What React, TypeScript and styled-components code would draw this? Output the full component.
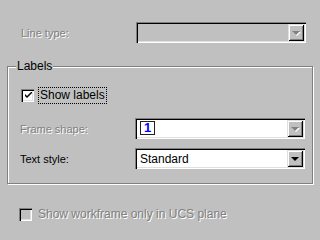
import styled, { createGlobalStyle } from "styled-components";

const GlobalStyle = createGlobalStyle`
  html, body {
    margin: 0;
    padding: 0;
    background: #c0c0c0;
  }
  body {
    font-family: "Liberation Sans", Arial, sans-serif;
    font-size: 11px;
  }
`;

const Dialog = styled.div`
  width: 320px;
  height: 240px;
  background: #c0c0c0;
  overflow: hidden;
  padding-top: 22px;
  box-sizing: border-box;
`;

const FieldRow = styled.div<{ $indent: number; $gap?: number }>`
  display: flex;
  align-items: center;
  padding-left: ${({ $indent }) => $indent}px;
  margin-top: ${({ $gap }) => $gap ?? 0}px;
`;

const Label = styled.span<{ $disabled?: boolean }>`
  width: 115px;
  flex: none;
  color: ${({ $disabled }) => ($disabled ? "#808080" : "#000")};
  text-shadow: ${({ $disabled }) => ($disabled ? "1px 1px 0 #fff" : "none")};
  white-space: nowrap;
`;

const Combo = styled.div<{ $disabled?: boolean }>`
  width: 170px;
  height: 21px;
  box-sizing: border-box;
  display: flex;
  align-items: stretch;
  padding: 2px;
  background: ${({ $disabled }) => ($disabled ? "#c0c0c0" : "#fff")};
  box-shadow: inset 1px 1px 0 #808080, inset 2px 2px 0 #000,
    inset -1px -1px 0 #fff, inset -2px -2px 0 #dfdfdf;
`;

const ComboValue = styled.div`
  flex: 1;
  display: flex;
  align-items: center;
  padding-left: 3px;
  color: #000;
  font-size: 12px;
`;

const Swatch = styled.div`
  width: 15px;
  height: 14px;
  box-sizing: border-box;
  margin-top: 1px;
  border: 1px solid #202020;
  background: #fff;
  color: #0000ff;
  font-weight: bold;
  font-size: 13px;
  line-height: 12px;
  text-align: center;
  align-self: flex-start;
`;

const ArrowButton = styled.div<{ $disabled?: boolean }>`
  width: 16px;
  flex: none;
  background: #c0c0c0;
  display: flex;
  align-items: center;
  justify-content: center;
  box-shadow: inset 1px 1px 0 #dfdfdf, inset -1px -1px 0 #000,
    inset 2px 2px 0 #fff, inset -2px -2px 0 #808080;

  &::after {
    content: "";
    width: 0;
    height: 0;
    margin-top: 1px;
    border-left: 4px solid transparent;
    border-right: 4px solid transparent;
    border-top: 4px solid ${({ $disabled }) => ($disabled ? "#808080" : "#000")};
    filter: ${({ $disabled }) =>
      $disabled ? "drop-shadow(1px 1px 0 #fff)" : "none"};
  }
`;

const GroupBox = styled.div`
  position: relative;
  margin: 23px 0 0 7px;
  width: 306px;
  height: 118px;
  box-sizing: border-box;
  border: 1px solid #808080;
  box-shadow: 1px 1px 0 #fff, inset 1px 1px 0 #fff;
`;

const Legend = styled.span`
  position: absolute;
  top: -7px;
  left: 8px;
  padding: 0 1px;
  background: #c0c0c0;
  color: #000;
  font-size: 12px;
  line-height: 13px;
`;

const CheckRow = styled.div<{ $indent: number; $gap: number }>`
  display: flex;
  align-items: center;
  gap: 4px;
  padding-left: ${({ $indent }) => $indent}px;
  margin-top: ${({ $gap }) => $gap}px;
`;

const CheckBox = styled.div<{ $disabled?: boolean }>`
  width: 13px;
  height: 13px;
  box-sizing: border-box;
  flex: none;
  display: flex;
  align-items: center;
  justify-content: center;
  background: ${({ $disabled }) => ($disabled ? "#c0c0c0" : "#fff")};
  box-shadow: inset 1px 1px 0 #808080, inset 2px 2px 0 #000,
    inset -1px -1px 0 #fff, inset -2px -2px 0 #dfdfdf;
`;

const CheckText = styled.span<{ $disabled?: boolean; $focused?: boolean }>`
  padding: 1px 1px 2px;
  border: 1px dotted ${({ $focused }) => ($focused ? "#000" : "transparent")};
  color: ${({ $disabled }) => ($disabled ? "#808080" : "#000")};
  text-shadow: ${({ $disabled }) => ($disabled ? "1px 1px 0 #fff" : "none")};
  font-size: 12px;
  line-height: 12px;
  white-space: nowrap;
`;

function Tick() {
  return (
    <svg width="7" height="7" viewBox="0 0 7 7" style={{ marginLeft: 1 }}>
      <path d="M0 2 L0 4 L2 6 L7 1 L7 -1 L2 4 Z" fill="#000" />
    </svg>
  );
}

export default function App() {
  return (
    <>
      <GlobalStyle />
      <Dialog>
        <FieldRow $indent={21}>
          <Label $disabled>Line type:</Label>
          <Combo $disabled>
            <ComboValue />
            <ArrowButton $disabled />
          </Combo>
        </FieldRow>

        <GroupBox>
          <Legend>Labels</Legend>

          <CheckRow $indent={13} $gap={20}>
            <CheckBox>
              <Tick />
            </CheckBox>
            <CheckText $focused>Show labels</CheckText>
          </CheckRow>

          <FieldRow $indent={12} $gap={14}>
            <Label $disabled>Frame shape:</Label>
            <Combo>
              <ComboValue>
                <Swatch>1</Swatch>
              </ComboValue>
              <ArrowButton $disabled />
            </Combo>
          </FieldRow>

          <FieldRow $indent={12} $gap={9}>
            <Label>Text style:</Label>
            <Combo>
              <ComboValue>Standard</ComboValue>
              <ArrowButton />
            </Combo>
          </FieldRow>
        </GroupBox>

        <CheckRow $indent={19} $gap={22}>
          <CheckBox $disabled />
          <CheckText $disabled>Show workframe only in UCS plane</CheckText>
        </CheckRow>
      </Dialog>
    </>
  );
}
